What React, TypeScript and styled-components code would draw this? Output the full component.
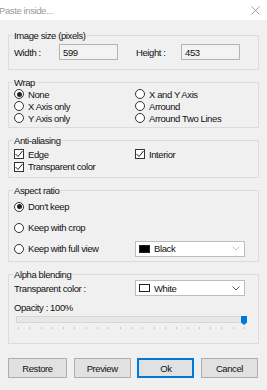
import styled, { createGlobalStyle } from "styled-components";

const Global = createGlobalStyle`
  html, body { margin: 0; padding: 0; background: #f0f0f0; }
  body {
    font-family: "Liberation Sans", Arial, sans-serif;
    font-size: 9.5px;
    letter-spacing: -0.4px;
    color: #111;
  }
`;

const Dialog = styled.div`
  width: 267px;
  height: 390px;
  overflow: hidden;
  background: #f0f0f0;
  display: flex;
  flex-direction: column;
`;

const TitleBar = styled.div`
  height: 20px;
  background: #ffffff;
  display: flex;
  align-items: center;
  justify-content: space-between;
  padding: 0 7px 0 0;
  box-sizing: border-box;
`;

const Title = styled.span`
  color: #9a9a9a;
  margin-left: -1px;
  font-size: 9.5px;
`;

const Body = styled.div`
  display: flex;
  flex-direction: column;
  gap: 7px;
  padding: 10px 8px 0;
`;

const Group = styled.fieldset<{ $h: number }>`
  margin: 0;
  height: ${(p) => p.$h}px;
  box-sizing: border-box;
  border: 1px solid #dcdcdc;
  padding: 0 4px 0 5px;
  min-width: 0;
`;

const Legend = styled.legend`
  padding: 0 1px;
  margin-left: -1px;
  line-height: 11px;
  height: 11px;
`;

const SizeRow = styled.div`
  display: grid;
  grid-template-columns: 45px 59px 18px 45px 59px;
  align-items: center;
  margin-top: 3px;
`;

const Field = styled.div`
  height: 16px;
  box-sizing: border-box;
  border: 1px solid #b4b4b4;
  background: #f3f3f3;
  display: flex;
  align-items: center;
  padding-left: 3px;
`;

const TwoCols = styled.div<{ $row: number; $pt?: number }>`
  display: grid;
  grid-template-columns: 121px 1fr;
  grid-auto-rows: ${(p) => p.$row}px;
  align-items: center;
  padding-top: ${(p) => p.$pt ?? 0}px;
`;

const Option = styled.label`
  display: flex;
  align-items: center;
  gap: 4px;
  white-space: nowrap;
`;

const RadioDot = styled.span<{ $on?: boolean }>`
  width: 10px;
  height: 10px;
  box-sizing: border-box;
  border-radius: 50%;
  border: 1px solid #333;
  background: #fff;
  display: flex;
  align-items: center;
  justify-content: center;
  &::after {
    content: "";
    width: 5px;
    height: 5px;
    border-radius: 50%;
    background: ${(p) => (p.$on ? "#222" : "transparent")};
  }
`;

const Box = styled.span`
  width: 10px;
  height: 10px;
  box-sizing: border-box;
  border: 1px solid #333;
  background: #fff;
  display: flex;
  align-items: center;
  justify-content: center;
`;

const Combo = styled.div`
  width: 110px;
  height: 16px;
  box-sizing: border-box;
  border: 1px solid #bdbdbd;
  background: #fff;
  display: flex;
  align-items: center;
  padding: 0 4px 0 3px;
  gap: 4px;
`;

const Swatch = styled.span<{ $c: string }>`
  width: 11px;
  height: 8px;
  box-sizing: border-box;
  background: ${(p) => p.$c};
  border: 1px solid #222;
`;

const ComboText = styled.span`
  flex: 1;
`;

const Line = styled.div<{ $mt?: number; $h: number }>`
  display: flex;
  align-items: center;
  margin-top: ${(p) => p.$mt ?? 0}px;
  height: ${(p) => p.$h}px;
  justify-content: space-between;
`;

const Slider = styled.div`
  position: relative;
  margin: 3px 0 0 2px;
  width: 231px;
  height: 16px;
`;

const Track = styled.div`
  margin-top: 3px;
  height: 5px;
  background: #e7e7e7;
  border: 1px solid #d6d6d6;
`;

const Thumb = styled.svg`
  position: absolute;
  right: 0;
  top: 0;
`;

const Ticks = styled.div`
  display: flex;
  justify-content: space-between;
  margin-top: 4px;
  padding: 0 2px;
`;

const Tick = styled.span`
  width: 1px;
  height: 2px;
  background: #c6c6c6;
`;

const Buttons = styled.div`
  display: grid;
  grid-template-columns: 59px 57px 57px 57px;
  justify-content: space-between;
  padding: 0 9px 0 8px;
  margin-top: 14px;
`;

const Button = styled.div<{ $default?: boolean }>`
  height: 20px;
  box-sizing: border-box;
  border: ${(p) => (p.$default ? "2px solid #0078d7" : "1px solid #adadad")};
  background: #e1e1e1;
  display: flex;
  align-items: center;
  justify-content: center;
`;

const Chevron = ({ color }: { color: string }) => (
  <svg width="8" height="5" viewBox="0 0 8 5">
    <polyline points="0.5,0.5 4,4 7.5,0.5" fill="none" stroke={color} strokeWidth="1" />
  </svg>
);

const Radio = ({ on, label }: { on?: boolean; label: string }) => (
  <Option>
    <RadioDot $on={on} />
    {label}
  </Option>
);

const Check = ({ label }: { label: string }) => (
  <Option>
    <Box>
      <svg width="8" height="8" viewBox="0 0 8 8">
        <polyline points="0.5,4 3,6.5 7.5,1" fill="none" stroke="#222" strokeWidth="1" />
      </svg>
    </Box>
    {label}
  </Option>
);

export default function App() {
  return (
    <Dialog>
      <Global />
      <TitleBar>
        <Title>Paste inside...</Title>
        <svg width="9" height="9" viewBox="0 0 9 9">
          <path d="M0.5 0.5 L8.5 8.5 M8.5 0.5 L0.5 8.5" stroke="#8a8a8a" strokeWidth="0.8" />
        </svg>
      </TitleBar>
      <Body>
        <Group $h={40}>
          <Legend>Image size (pixels)</Legend>
          <SizeRow>
            <span>Width :</span>
            <Field>599</Field>
            <span />
            <span>Height :</span>
            <Field>453</Field>
          </SizeRow>
        </Group>

        <Group $h={51}>
          <Legend>Wrap</Legend>
          <TwoCols $row={12}>
            <Radio on label="None" />
            <Radio label="X and Y Axis" />
            <Radio label="X Axis only" />
            <Radio label="Arround" />
            <Radio label="Y Axis only" />
            <Radio label="Arround Two Lines" />
          </TwoCols>
        </Group>

        <Group $h={43}>
          <Legend>Anti-aliasing</Legend>
          <TwoCols $row={12.5} $pt={2}>
            <Check label="Edge" />
            <Check label="Interior" />
            <Check label="Transparent color" />
          </TwoCols>
        </Group>

        <Group $h={77}>
          <Legend>Aspect ratio</Legend>
          <TwoCols $row={21}>
            <Radio on label="Don't keep" />
            <span />
            <Radio label="Keep with crop" />
            <span />
            <Radio label="Keep with full view" />
            <Combo>
              <Swatch $c="#000" />
              <ComboText>Black</ComboText>
              <Chevron color="#c4c4c4" />
            </Combo>
          </TwoCols>
        </Group>

        <Group $h={75}>
          <Legend>Alpha blending</Legend>
          <TwoCols $row={16}>
            <span>Transparent color :</span>
            <Combo>
              <Swatch $c="#fff" />
              <ComboText>White</ComboText>
              <Chevron color="#555" />
            </Combo>
          </TwoCols>
          <Line $mt={5} $h={12}>Opacity : 100%</Line>
          <Slider>
            <Track />
            <Thumb width="6" height="9" viewBox="0 0 6 9">
              <path d="M0 0 H6 V6.5 L3 9 L0 6.5 Z" fill="#0078d7" />
            </Thumb>
            <Ticks>
              {Array.from({ length: 21 }).map((_, i) => (
                <Tick key={i} />
              ))}
            </Ticks>
          </Slider>
        </Group>
      </Body>
      <Buttons>
        <Button>Restore</Button>
        <Button>Preview</Button>
        <Button $default>Ok</Button>
        <Button>Cancel</Button>
      </Buttons>
    </Dialog>
  );
}
